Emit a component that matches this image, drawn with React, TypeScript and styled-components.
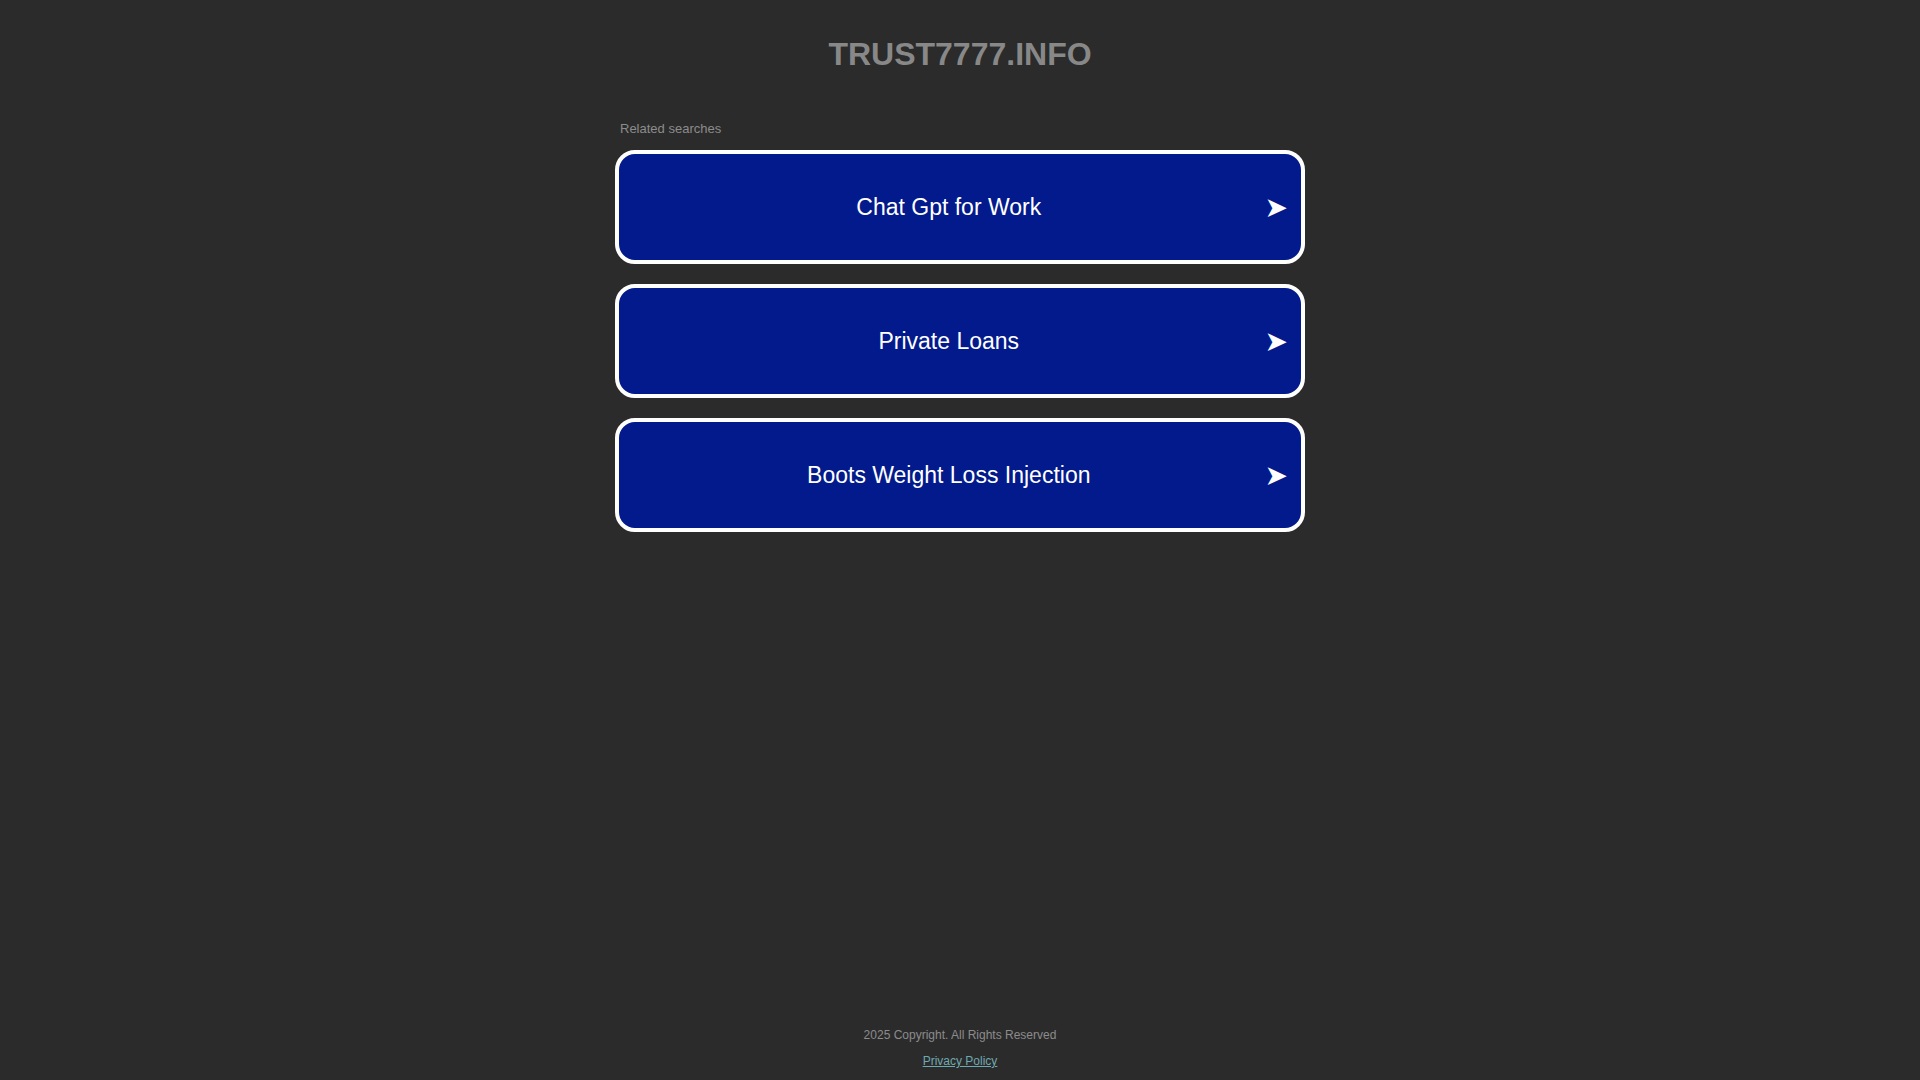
import styled, { createGlobalStyle } from "styled-components";

const GlobalStyle = createGlobalStyle`
  html, body {
    margin: 0;
    padding: 0;
    background: #2b2b2b;
    font-family: "Liberation Sans", Arial, sans-serif;
  }
`;

const Page = styled.div`
  display: flex;
  flex-direction: column;
  min-height: 100vh;
  box-sizing: border-box;
`;

const Title = styled.h1`
  margin: 0;
  padding-top: 34px;
  text-align: center;
  font-size: 32px;
  font-weight: bold;
  line-height: 40px;
  color: #888888;
`;

const Main = styled.div`
  width: 690px;
  margin: 0 auto;
  padding-top: 47px;
`;

const Label = styled.div`
  font-size: 13px;
  line-height: 16px;
  color: #8c8c8c;
  padding-left: 5px;
  margin-bottom: 13px;
`;

const List = styled.div`
  display: flex;
  flex-direction: column;
  gap: 20px;
`;

const Card = styled.a`
  display: flex;
  align-items: center;
  height: 114px;
  box-sizing: border-box;
  border: 4px solid #ffffff;
  border-radius: 20px;
  background: #021a8b;
  color: #ffffff;
  text-decoration: none;
  padding: 1px 13px 0 14px;
  cursor: pointer;
`;

const CardText = styled.span`
  flex: 1;
  text-align: center;
  font-size: 23px;
`;

const Arrow = styled.span`
  font-family: "DejaVu Sans", sans-serif;
  font-size: 28px;
  line-height: 1;
`;

const Footer = styled.footer`
  margin-top: auto;
  padding-bottom: 12px;
  text-align: center;
  font-size: 12px;
  color: #8c8c8c;
`;

const Copy = styled.div`
  line-height: 14px;
  margin-bottom: 12px;
`;

const Privacy = styled.a`
  color: #6fa9b0;
  text-decoration: underline;
  line-height: 14px;
`;

const searches = ["Chat Gpt for Work", "Private Loans", "Boots Weight Loss Injection"];

export default function App() {
  return (
    <>
      <GlobalStyle />
      <Page>
        <Title>TRUST7777.INFO</Title>
        <Main>
          <Label>Related searches</Label>
          <List>
            {searches.map((s) => (
              <Card key={s}>
                <CardText>{s}</CardText>
                <Arrow>➤</Arrow>
              </Card>
            ))}
          </List>
        </Main>
        <Footer>
          <Copy>2025 Copyright. All Rights Reserved</Copy>
          <Privacy href="#">Privacy Policy</Privacy>
        </Footer>
      </Page>
    </>
  );
}
